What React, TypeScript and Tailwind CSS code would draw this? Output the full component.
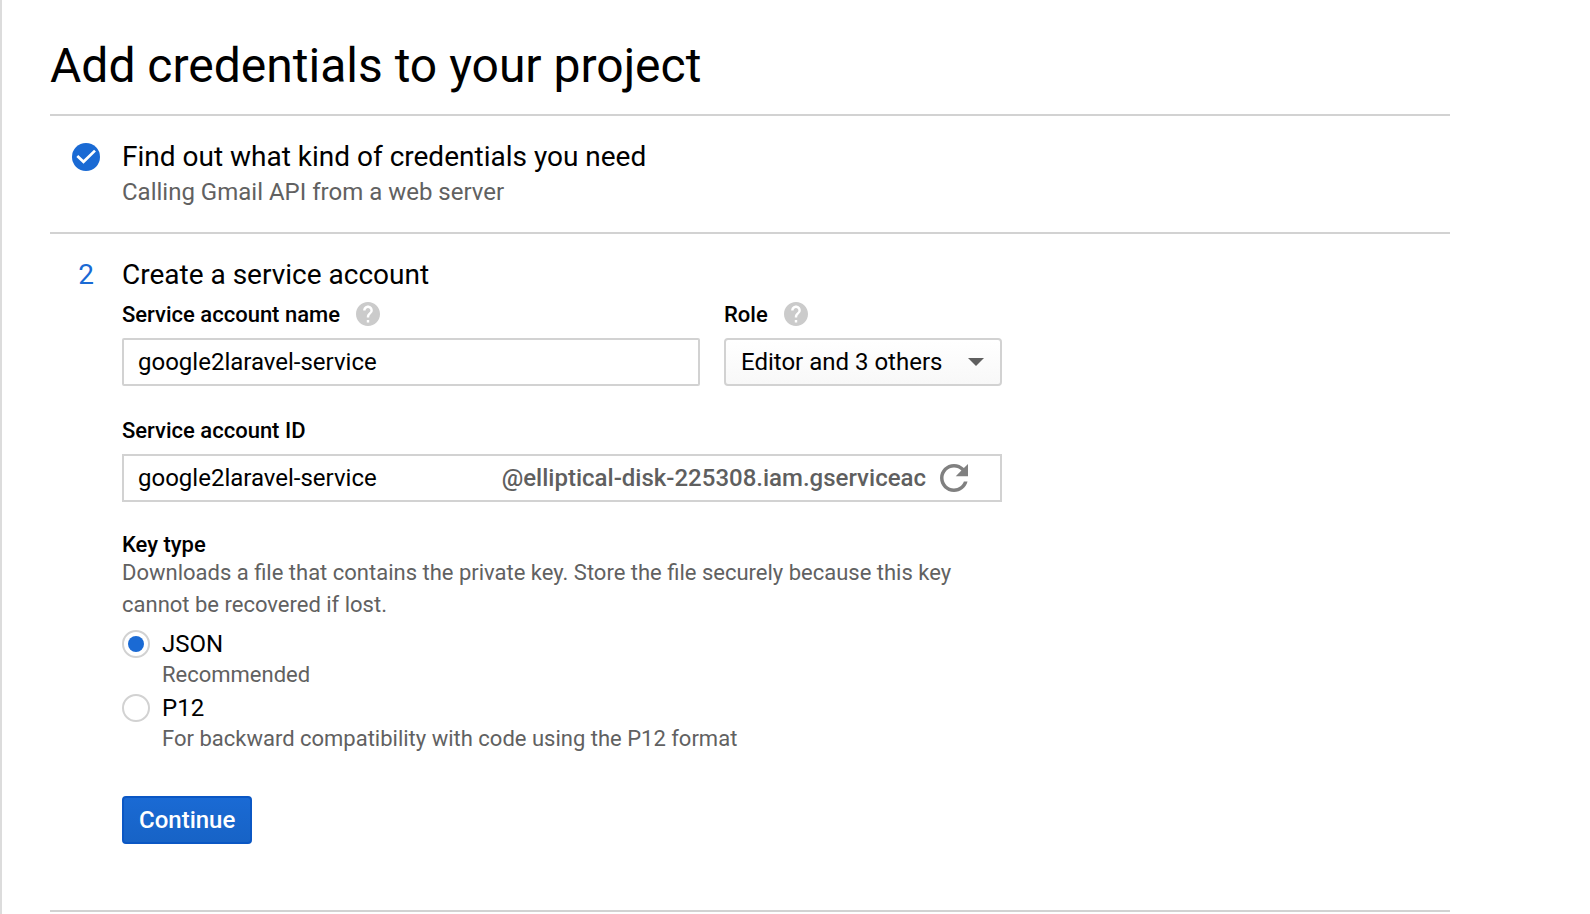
import { useState, type ReactNode } from "react";

function CheckIcon() {
  return (
    <svg viewBox="0 0 28 28" className="size-7" aria-label="Completed" role="img">
      <circle cx="14" cy="14" r="14" fill="#1a6ad4" />
      <path d="M5.300 12.900l6.200 5.900L23 7.600" fill="none" stroke="#fff" strokeWidth="2.7" />
    </svg>
  );
}

function HelpButton({ label }: { label: string }) {
  return (
    <button type="button" aria-label={label} className="text-[#cbcbcb]">
      <svg viewBox="2 2 20 20" className="size-6" fill="currentColor">
        <path d="M12 2C6.48 2 2 6.48 2 12s4.480 10 10 10 10-4.480 10-10S17.520 2 12 2zm1 17h-2v-2h2v2zm2.070-7.750l-.9.920C13.450 12.900 13 13.500 13 15h-2v-.5c0-1.100.450-2.100 1.170-2.830l1.240-1.260c.370-.360.590-.860.590-1.410 0-1.100-.9-2-2-2s-2 .9-2 2H8c0-2.210 1.790-4 4-4s4 1.790 4 4c0 .880-.360 1.680-.930 2.250z" />
      </svg>
    </button>
  );
}

function RefreshIcon() {
  return (
    <svg viewBox="4 4 16 16" className="size-7" fill="currentColor">
      <path d="M17.65 6.35C16.200 4.900 14.210 4 12 4c-4.420 0-7.990 3.580-7.990 8s3.570 8 7.990 8c3.730 0 6.840-2.550 7.730-6h-2.080c-.820 2.330-3.040 4-5.650 4-3.310 0-6-2.690-6-6s2.690-6 6-6c1.660 0 3.140.690 4.220 1.780L13 11h7V4l-2.350 2.350z" />
    </svg>
  );
}

function Step({ marker, title, children }: { marker: ReactNode; title: string; children: ReactNode }) {
  return (
    <section className="flex border-b-2 border-[#d2d2d2] pt-[22px]">
      <div className="flex h-[38px] w-[72px] shrink-0 items-center justify-center text-[28px] leading-[38px] text-[#1a6ad4]">
        {marker}
      </div>
      <div className="min-w-0 flex-1">
        <h2 className="text-[28px] leading-[38px]">{title}</h2>
        {children}
      </div>
    </section>
  );
}

const keyTypes = [
  { id: "json", name: "JSON", note: "Recommended" },
  { id: "p12", name: "P12", note: "For backward compatibility with code using the P12 format" },
];

export default function App() {
  const [name, setName] = useState("google2laravel-service");
  const [accountId, setAccountId] = useState("google2laravel-service");
  const [keyType, setKeyType] = useState("json");

  return (
    <main className="min-h-screen border-l-2 border-[#dcdcdc] bg-white pt-[38px] pr-[140px] pl-12 font-['Roboto',sans-serif] text-black">
      <h1 className="border-b-2 border-[#d2d2d2] pb-5 text-[48px] leading-[56px]">Add credentials to your project</h1>

      <Step marker={<CheckIcon />} title="Find out what kind of credentials you need">
        <p className="pb-6 text-[24px] leading-8 text-[#616161]">Calling Gmail API from a web server</p>
      </Step>

      <Step marker="2" title="Create a service account">
        <form className="max-w-[880px] pb-[66px]" onSubmit={(e) => e.preventDefault()}>
          <div className="flex gap-6">
            <div className="min-w-0 flex-1">
              <div className="mb-1 flex h-10 items-center gap-4">
                <label htmlFor="account-name" className="text-[22px] font-medium">Service account name</label>
                <HelpButton label="About the service account name" />
              </div>
              <input
                id="account-name"
                value={name}
                onChange={(e) => setName(e.target.value)}
                className="h-12 w-full rounded-xs border-2 border-[#d2d2d2] px-3.5 text-[24px]"
              />
            </div>
            <div>
              <div className="mb-1 flex h-10 items-center gap-4">
                <label htmlFor="role" className="text-[22px] font-medium">Role</label>
                <HelpButton label="About roles" />
              </div>
              <div className="relative">
                <select
                  id="role"
                  className="h-12 w-[278px] appearance-none rounded-sm border-2 border-[#d2d2d2] bg-linear-to-b from-white to-[#f8f8f8] pr-12 pl-[15px] text-[24px]"
                >
                  <option>Editor and 3 others</option>
                </select>
                <svg viewBox="0 0 16 8" className="pointer-events-none absolute top-5 right-[18px] h-2 w-4" fill="#5f5f5f">
                  <path d="M0 0h16L8 8z" />
                </svg>
              </div>
            </div>
          </div>

          <label htmlFor="account-id" className="mt-[26px] mb-1 block text-[22px] leading-[38px] font-medium">
            Service account ID
          </label>
          <div className="flex h-12 items-center border-2 border-[#d2d2d2] pr-8 pl-3.5">
            <input
              id="account-id"
              value={accountId}
              onChange={(e) => setAccountId(e.target.value)}
              className="h-full min-w-0 flex-1 text-[24px]"
            />
            <span className="mr-3.5 text-[24px] font-medium text-[#5f5f5f]">@elliptical-disk-225308.iam.gserviceac</span>
            <button type="button" aria-label="Regenerate ID" className="text-[#808080]">
              <RefreshIcon />
            </button>
          </div>

          <fieldset className="mt-[31px]">
            <legend className="text-[22px] leading-6 font-medium">Key type</legend>
            <p className="text-[22px] leading-8 text-[#616161]">
              Downloads a file that contains the private key. Store the file securely because this key cannot be recovered
              if lost.
            </p>
            <div className="mt-[7px] flex flex-col gap-0.5">
              {keyTypes.map((type) => (
                <label key={type.id} className="flex gap-3">
                  <input
                    type="radio"
                    name="key-type"
                    checked={keyType === type.id}
                    onChange={() => setKeyType(type.id)}
                    className="mt-0.5 grid size-7 shrink-0 appearance-none place-items-center rounded-full border-2 border-[#d2d2d2] before:size-4 before:rounded-full checked:before:bg-[#1a6ad4]"
                  />
                  <span>
                    <span className="block text-[24px] leading-8">{type.name}</span>
                    <span className="block text-[22px] leading-[30px] text-[#616161]">{type.note}</span>
                  </span>
                </label>
              ))}
            </div>
          </fieldset>

          <button
            type="submit"
            className="mt-[42px] h-12 rounded-sm border-2 border-[#0b57c4] bg-linear-to-b from-[#1a6ad4] to-[#1763c6] px-[15px] text-[24px] font-medium text-white"
          >
            Continue
          </button>
        </form>
      </Step>
    </main>
  );
}
